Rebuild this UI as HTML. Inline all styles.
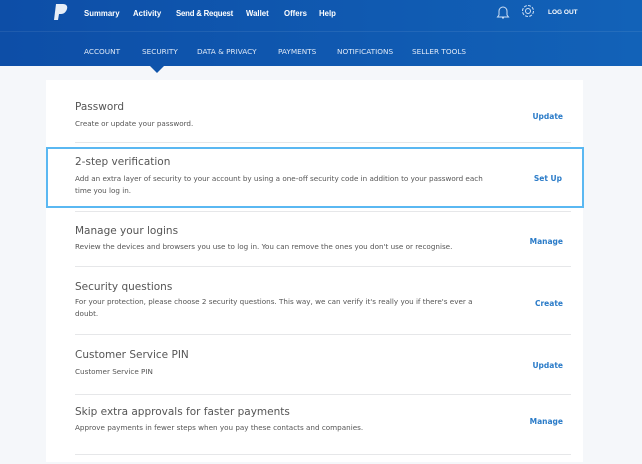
<!DOCTYPE html>
<html><head><style>
*{margin:0;padding:0;box-sizing:border-box}
body{width:642px;height:464px;overflow:hidden;background:#f5f7fa;font-family:"DejaVu Sans","Liberation Sans",sans-serif;position:relative}
.hdr{position:absolute;left:0;top:0;width:642px;height:66px;background:linear-gradient(90deg,#0e4ea6,#1160b5)}
.hdr .sep{position:absolute;left:0;top:31px;width:642px;height:1px;background:rgba(255,255,255,.08)}
.t{position:absolute;color:#fff;font-weight:bold;font-size:8px;white-space:nowrap;font-family:"Liberation Sans",sans-serif}
.s{position:absolute;color:#dfe9f7;font-size:7.3px;top:47px;white-space:nowrap}
.card{position:absolute;left:46px;top:80px;width:537px;height:382px;background:#fff}
.ti{position:absolute;left:75px;font-size:10.5px;color:#555;white-space:nowrap}
.de{position:absolute;left:75px;font-size:7.2px;color:#555;line-height:12px;width:410px}
.ac{position:absolute;right:79px;font-size:7.5px;font-weight:bold;color:#2a7bc8}
.dv{position:absolute;left:75px;width:496px;height:1px;background:#e6e7e9}
.hl{position:absolute;left:46px;top:147px;width:538px;height:61px;border:2px solid #5ab8f2}
</style></head><body>
<div class="hdr"><div class="sep"></div>
<svg style="position:absolute;left:54px;top:4px" width="14" height="17" viewBox="0 0 14 17"><path d="M2 0h7c3 0 5 2 4 5-1 3-3 5-6 5H5l-1 6H0z" fill="#fff" opacity=".9"/></svg>
<div class="t" style="left:84px;top:9px">Summary</div>
<div class="t" style="left:133px;top:9px">Activity</div>
<div class="t" style="left:176px;top:9px">Send &amp; Request</div>
<div class="t" style="left:246px;top:9px">Wallet</div>
<div class="t" style="left:284px;top:9px">Offers</div>
<div class="t" style="left:319px;top:9px">Help</div>
<svg style="position:absolute;left:496px;top:4px" width="14" height="16" viewBox="0 0 14 16"><path d="M3 11V7a4 4 0 018 0v4l1.5 2h-11z M6 14h2" fill="none" stroke="#cfe0f5" stroke-width="1"/></svg>
<svg style="position:absolute;left:520px;top:3px" width="16" height="16" viewBox="0 0 16 16"><circle cx="8" cy="8" r="2.5" fill="none" stroke="#cfe0f5"/><circle cx="8" cy="8" r="5.5" fill="none" stroke="#cfe0f5" stroke-dasharray="3 1.3"/></svg>
<div class="t" style="left:548px;top:9px;font-size:6.5px">LOG OUT</div>
<div class="s" style="left:84px">ACCOUNT</div>
<div class="s" style="left:142px">SECURITY</div>
<div class="s" style="left:197px">DATA &amp; PRIVACY</div>
<div class="s" style="left:278px">PAYMENTS</div>
<div class="s" style="left:337px">NOTIFICATIONS</div>
<div class="s" style="left:412px">SELLER TOOLS</div>
</div>
<div style="position:absolute;left:150px;top:66px;width:0;height:0;border-left:7px solid transparent;border-right:7px solid transparent;border-top:7px solid #0f54aa"></div>
<div class="card"></div>
<div class="ti" style="top:101px">Password</div>
<div class="de" style="top:118px">Create or update your password.</div>
<div class="ac" style="top:112px">Update</div>
<div class="dv" style="top:142px"></div>
<div class="hl"></div>
<div class="ti" style="top:156px">2-step verification</div>
<div class="de" style="top:173px">Add an extra layer of security to your account by using a one-off security code in addition to your password each time you log in.</div>
<div class="ac" style="top:174px;right:80px">Set Up</div>
<div class="dv" style="top:211px"></div>
<div class="ti" style="top:225px">Manage your logins</div>
<div class="de" style="top:241px;width:460px">Review the devices and browsers you use to log in. You can remove the ones you don't use or recognise.</div>
<div class="ac" style="top:237px">Manage</div>
<div class="dv" style="top:266px"></div>
<div class="ti" style="top:281px">Security questions</div>
<div class="de" style="top:296px">For your protection, please choose 2 security questions. This way, we can verify it's really you if there's ever a doubt.</div>
<div class="ac" style="top:299px">Create</div>
<div class="dv" style="top:334px"></div>
<div class="ti" style="top:349px">Customer Service PIN</div>
<div class="de" style="top:366px">Customer Service PIN</div>
<div class="ac" style="top:361px">Update</div>
<div class="dv" style="top:394px"></div>
<div class="ti" style="top:406px">Skip extra approvals for faster payments</div>
<div class="de" style="top:422px;width:480px">Approve payments in fewer steps when you pay these contacts and companies.</div>
<div class="ac" style="top:417px">Manage</div>
<div class="dv" style="top:454px"></div>
<style>.hdr .t:nth-of-type(n){}</style>
<style>
.hdr .t{font-size:7.8px}
</style>
<style>
.hdr{background:linear-gradient(90deg,#0d4ea7,#1262b8)}
</style>
<style>
.hdr .t[style*="left:176px"]{letter-spacing:-0.2px}
</style>
<style>
.t{transform-origin:left top}
.hdr .t{font-family:"Liberation Sans Narrow","Liberation Sans",sans-serif}
</style>
<style>
.hdr .t{display:inline-block;width:auto}
.hdr .t[style*="left:84px"]{width:44px}
.hdr .t[style*="left:133px"]{width:38px}
.hdr .t[style*="left:176px"]{width:66px}
.hdr .t[style*="left:246px"]{width:30px}
.hdr .t[style*="left:284px"]{width:28px}
</style>
</body></html>
